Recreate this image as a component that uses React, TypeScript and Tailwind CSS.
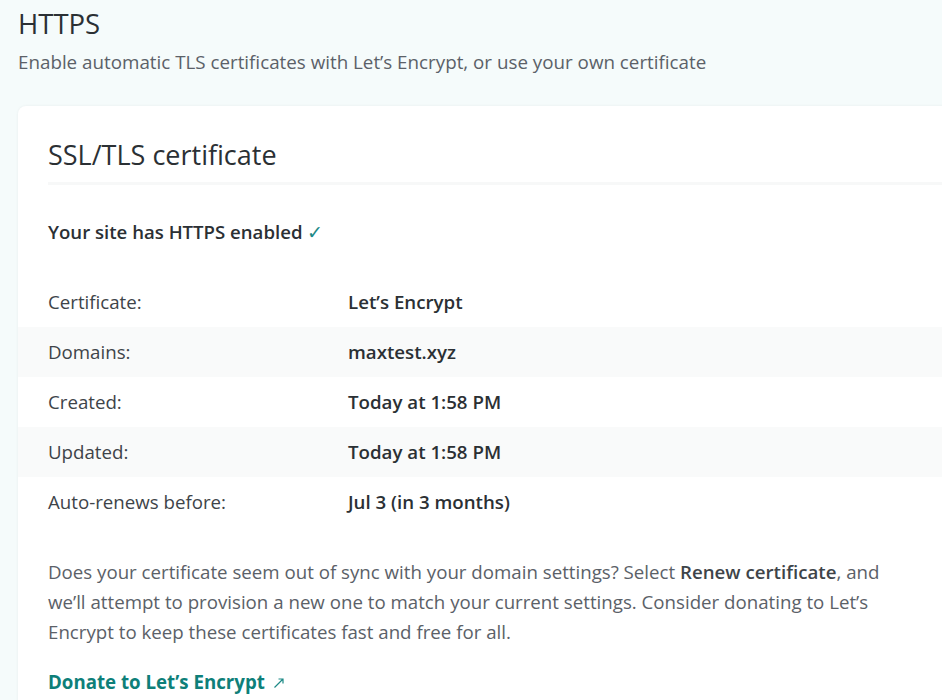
import React from "react";

const rows: { label: string; value: string; shade: boolean }[] = [
  { label: "Certificate:", value: "Let’s Encrypt", shade: false },
  { label: "Domains:", value: "maxtest.xyz", shade: true },
  { label: "Created:", value: "Today at 1:58 PM", shade: false },
  { label: "Updated:", value: "Today at 1:58 PM", shade: true },
  { label: "Auto-renews before:", value: "Jul 3 (in 3 months)", shade: false },
];

export default function App() {
  return (
    <div
      className="min-h-[700px] w-[942px] overflow-hidden bg-[#f5fbfb] pl-[18px] pt-[6px]"
      style={{ fontFamily: "'Open Sans', sans-serif" }}
    >
      <h1 className="text-[27.5px] leading-[36px] font-normal text-[#2b3034]">HTTPS</h1>
      <p className="mt-[6px] text-[18.8px] leading-[28px] text-[#5b6168]">
        Enable automatic TLS certificates with Let’s Encrypt, or use your own certificate
      </p>
      <div className="mt-[30px] w-[940px] rounded-lg bg-white pt-[31px] pb-[30px] shadow-[0_0_3px_rgba(0,0,0,0.06)]">
        <div className="pl-[30px]">
          <h2 className="pb-[9px] text-[27px] leading-[36px] text-[#2b3034]">SSL/TLS certificate</h2>
          <div className="h-[3px] bg-[#f7f8f8]" />
          <p className="mt-[33px] text-[18.6px] leading-[28px] font-semibold text-[#2b3034]">
            Your site has HTTPS enabled <span className="font-normal text-[#1d8a86]">✓</span>
          </p>
        </div>
        <div className="mt-[31px]">
          {rows.map((r) => (
            <div
              key={r.label}
              className={`flex h-[50px] items-center pl-[30px] text-[18.7px] ${r.shade ? "bg-[#f9fafa]" : ""}`}
            >
              <div className="w-[300px] text-[#3e4449]">{r.label}</div>
              <div className="font-semibold text-[#2b3034]">{r.value}</div>
            </div>
          ))}
        </div>
        <div className="pl-[30px]">
          <p className="mt-[30px] w-[852px] text-[18.7px] leading-[30px] text-[#5b6168]">
            Does your certificate seem out of sync with your domain settings? Select{" "}
            <span className="font-semibold text-[#3e4449]">Renew certificate</span>, and we’ll attempt to
            provision a new one to match your current settings. Consider donating to Let’s Encrypt to keep
            these certificates fast and free for all.
          </p>
          <a className="mt-[20px] flex items-center gap-[8px] text-[18.7px] leading-[30px] font-bold text-[#0e7f79]">
            Donate to Let’s Encrypt
            <svg width="12" height="12" viewBox="0 0 12 12" className="mt-[2px]">
              <path d="M1.5 10.5 L10 2 M5.5 2 H10 V6.5" stroke="#1d8a86" strokeWidth="1.2" fill="none" />
            </svg>
          </a>
        </div>
      </div>
    </div>
  );
}
